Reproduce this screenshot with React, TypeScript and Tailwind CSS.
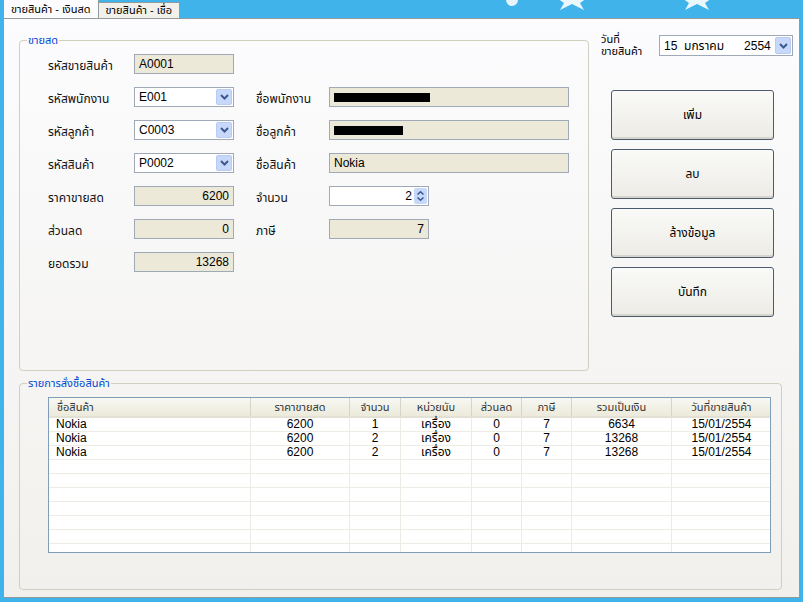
import React from 'react'

const font = { fontFamily: '"Liberation Sans", "Noto Sans", "Noto Sans Thai", "DejaVu Sans", sans-serif' }

function Chevron() {
  return (
    <svg width="9" height="6" viewBox="0 0 9 6">
      <path d="M1 1 L4.5 4.5 L8 1" fill="none" stroke="#3d5a8f" strokeWidth="2" />
    </svg>
  )
}

function ReadBox({ value, right, width = 'w-[100px]' }: { value?: string; right?: boolean; width?: string }) {
  return (
    <div
      className={`${width} h-[20px] border border-[#9fa9b7] bg-[#ece9d8] flex items-center px-[4px] text-[12px] text-black ${right ? 'justify-end' : ''}`}
    >
      {value}
    </div>
  )
}

function Combo({ value }: { value: string }) {
  return (
    <div className="w-[100px] h-[20px] border border-[#9fa9b7] bg-white flex items-center justify-between pl-[4px] pr-[1px] text-[12px] text-black">
      <span>{value}</span>
      <div className="w-[16px] h-[16px] rounded-[2px] border border-[#b9cbf3] bg-[#c8d8fb] flex items-center justify-center">
        <Chevron />
      </div>
    </div>
  )
}

function Redacted({ w }: { w: string }) {
  return (
    <div className="w-[240px] h-[20px] border border-[#9fa9b7] bg-[#ece9d8] flex items-center px-[4px]">
      <div className={`${w} h-[9px] bg-black`} />
    </div>
  )
}

function Label({ children }: { children: React.ReactNode }) {
  return <div className="text-[12px] leading-[16px] text-[#111] pt-[4px]">{children}</div>
}

function WinButton({ children }: { children: React.ReactNode }) {
  return (
    <div className="w-[163px] h-[50px] rounded-[3px] border border-[#4b5a6c] bg-gradient-to-b from-[#fafaf8] to-[#ecebe6] shadow-[inset_0_-2px_0_#d6d5cd] flex items-center justify-center text-[12px] text-black">
      {children}
    </div>
  )
}

const cols = [
  { w: 'w-[202px]', h: 'ชื่อสินค้า' },
  { w: 'w-[99px]', h: 'ราคาขายสด' },
  { w: 'w-[51px]', h: 'จำนวน' },
  { w: 'w-[71px]', h: 'หน่วยนับ' },
  { w: 'w-[50px]', h: 'ส่วนลด' },
  { w: 'w-[50px]', h: 'ภาษี' },
  { w: 'w-[100px]', h: 'รวมเป็นเงิน' },
  { w: 'w-[100px]', h: 'วันที่ขายสินค้า' },
]

const rows = [
  ['Nokia', '6200', '1', 'เครื่อง', '0', '7', '6634', '15/01/2554'],
  ['Nokia', '6200', '2', 'เครื่อง', '0', '7', '13268', '15/01/2554'],
  ['Nokia', '6200', '2', 'เครื่อง', '0', '7', '13268', '15/01/2554'],
  ['', '', '', '', '', '', '', ''],
  ['', '', '', '', '', '', '', ''],
  ['', '', '', '', '', '', '', ''],
  ['', '', '', '', '', '', '', ''],
  ['', '', '', '', '', '', '', ''],
  ['', '', '', '', '', '', '', ''],
  ['', '', '', '', '', '', '', ''],
]

export default function App() {
  return (
    <div className="w-[803px] h-[602px] bg-[#3fb3ea] overflow-hidden relative" style={font}>
      {/* wallpaper bits */}
      <svg className="absolute left-[500px] top-[-8px]" width="24" height="16" viewBox="0 0 24 16">
        <circle cx="12" cy="8" r="6" fill="#e6f5fc" />
      </svg>
      <svg className="absolute left-[552px] top-[-14px]" width="40" height="24" viewBox="0 0 40 24">
        <polygon points="20,0 25,9 38,10 28,17 32,24 20,18 8,24 12,17 2,10 15,9" fill="#eaf7fd" />
      </svg>
      <svg className="absolute left-[677px] top-[-14px]" width="40" height="24" viewBox="0 0 40 24">
        <polygon points="20,0 25,9 38,10 28,17 32,24 20,18 8,24 12,17 2,10 15,9" fill="#eaf7fd" />
      </svg>

      <div className="flex flex-col h-full pl-[3px] pr-[3px] pb-[4px]">
        {/* tabs */}
        <div className="flex items-end h-[18px] relative z-10">
          <div className="h-[19px] px-[7px] bg-[#fcfcfe] border border-b-0 border-[#919b9c] text-[11px] text-black flex items-center">
            ขายสินค้า - เงินสด
          </div>
          <div className="h-[16px] px-[7px] bg-[#f1f0ea] border border-b-0 border-l-0 border-[#919b9c] text-[11px] text-black flex items-center">
            ขายสินค้า - เชื่อ
          </div>
        </div>

        {/* tab page */}
        <div className="flex-1 border border-[#919b9c] bg-gradient-to-b from-[#fcfcfe] to-[#f1f0ec] pl-[15px] pt-[14px] flex flex-col">
          <div className="flex">
            <fieldset className="w-[570px] h-[338px] border border-[#d0d0bf] rounded-[4px] pl-[28px]">
              <legend className="ml-[-21px] px-[1px] text-[11px] text-[#0046d5] leading-[14px]">ขายสด</legend>
              <div className="grid grid-cols-[86px_100px_22px_73px_240px] auto-rows-[20px] gap-y-[13px] mt-[7px]">
                <Label>รหัสขายสินค้า</Label>
                <ReadBox value="A0001" />
                <div className="col-span-3" />

                <Label>รหัสพนักงาน</Label>
                <Combo value="E001" />
                <div />
                <Label>ชื่อพนักงาน</Label>
                <Redacted w="w-[96px]" />

                <Label>รหัสลูกค้า</Label>
                <Combo value="C0003" />
                <div />
                <Label>ชื่อลูกค้า</Label>
                <Redacted w="w-[69px]" />

                <Label>รหัสสินค้า</Label>
                <Combo value="P0002" />
                <div />
                <Label>ชื่อสินค้า</Label>
                <ReadBox value="Nokia" width="w-[240px]" />

                <Label>ราคาขายสด</Label>
                <ReadBox value="6200" right />
                <div />
                <Label>จำนวน</Label>
                <div className="w-[100px] h-[20px] border border-[#9fa9b7] bg-white flex items-center justify-end pr-[1px] text-[12px] text-black">
                  <span className="mr-[2px]">2</span>
                  <div className="w-[13px] h-[16px] rounded-[2px] bg-[#c8d8fb] flex flex-col items-center justify-center gap-[2px]">
                    <svg width="7" height="4" viewBox="0 0 7 4"><path d="M0.5 3.5 L3.5 0.8 L6.5 3.5" fill="none" stroke="#3d5a8f" strokeWidth="1.5" /></svg>
                    <svg width="7" height="4" viewBox="0 0 7 4"><path d="M0.5 0.5 L3.5 3.2 L6.5 0.5" fill="none" stroke="#3d5a8f" strokeWidth="1.5" /></svg>
                  </div>
                </div>

                <Label>ส่วนลด</Label>
                <ReadBox value="0" right />
                <div />
                <Label>ภาษี</Label>
                <ReadBox value="7" right />

                <Label>ยอดรวม</Label>
                <ReadBox value="13268" right />
                <div className="col-span-3" />
              </div>
            </fieldset>

            <div className="ml-[12px] flex flex-col">
              <div className="flex items-start">
                <div className="text-[11px] leading-[12px] text-black w-[58px]">
                  วันที่
                  <br />
                  ขายสินค้า
                </div>
                <div className="w-[134px] h-[21px] mt-[2px] border border-[#9fa9b7] bg-white flex items-center justify-between pl-[4px] pr-[1px] text-[12px] text-black">
                  <span>15&nbsp;&nbsp;มกราคม&nbsp;&nbsp;&nbsp;&nbsp;&nbsp;&nbsp;2554</span>
                  <div className="w-[16px] h-[17px] rounded-[2px] border border-[#b9cbf3] bg-[#c8d8fb] flex items-center justify-center">
                    <Chevron />
                  </div>
                </div>
              </div>
              <div className="ml-[10px] mt-[33px] flex flex-col gap-[9px]">
                <WinButton>เพิ่ม</WinButton>
                <WinButton>ลบ</WinButton>
                <WinButton>ล้างข้อมูล</WinButton>
                <WinButton>บันทึก</WinButton>
              </div>
            </div>
          </div>

          <fieldset className="w-[763px] h-[214px] mt-[5px] border border-[#d0d0bf] rounded-[4px] pl-[28px]">
            <legend className="ml-[-21px] px-[1px] text-[11px] text-[#0046d5] leading-[14px]">รายการสั่งซื้อสินค้า</legend>
            <div className="w-[723px] h-[156px] mt-[7px] border border-[#7f9db9] bg-white overflow-hidden">
              <div className="flex h-[20px] bg-gradient-to-b from-[#f8f8f3] to-[#ebeadb] border-b-[2px] border-[#e2e1d3]">
                {cols.map((c, i) => (
                  <div
                    key={c.h}
                    className={`${c.w} shrink-0 border-r border-[#d5d4c6] text-[11px] text-[#333] flex items-center ${i === 0 ? 'pl-[8px]' : 'justify-center'}`}
                  >
                    {c.h}
                  </div>
                ))}
              </div>
              {rows.map((r, ri) => (
                <div key={ri} className="flex h-[14px] border-b border-[#ecebe4]">
                  {r.map((v, ci) => (
                    <div
                      key={ci}
                      className={`${cols[ci].w} shrink-0 border-r border-[#ecebe4] text-[12px] leading-[13px] text-black flex items-center ${ci === 0 ? 'pl-[7px]' : 'justify-center'}`}
                    >
                      {v}
                    </div>
                  ))}
                </div>
              ))}
            </div>
          </fieldset>
        </div>
      </div>
    </div>
  )
}
